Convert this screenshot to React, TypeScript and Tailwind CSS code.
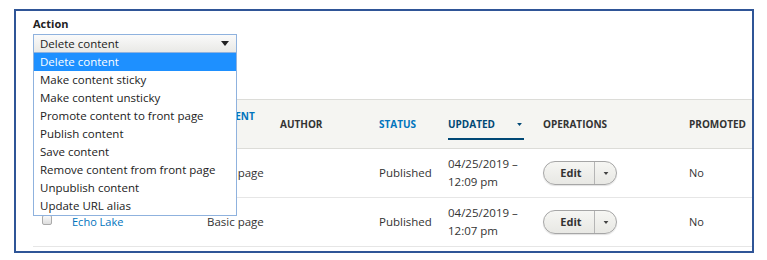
// --- Bulk action form over a content listing table ---

const actions = [
  'Delete content',
  'Make content sticky',
  'Make content unsticky',
  'Promote content to front page',
  'Publish content',
  'Save content',
  'Remove content from front page',
  'Unpublish content',
  'Update URL alias',
]

// first row's title sits under the open list, so it is left empty
const rows = [
  { title: '', type: 'Basic page', status: 'Published', date: '04/25/2019 –', time: '12:09 pm', promoted: 'No' },
  { title: 'Echo Lake', type: 'Basic page', status: 'Published', date: '04/25/2019 –', time: '12:07 pm', promoted: 'No' },
]

function Caret({ className }: { className?: string }) {
  return (
    <svg width="8" height="5" viewBox="0 0 8 5" className={className}>
      <path d="M0 0 L8 0 L4 5 Z" fill="currentColor" />
    </svg>
  )
}

function EditButton() {
  return (
    <div className="flex h-[24px] w-[74px] items-stretch rounded-full border border-[#a6a6a6] bg-gradient-to-b from-[#f6f6f3] to-[#e8e8e4] shadow-[0_1px_1px_rgba(0,0,0,0.12)]">
      <span className="flex flex-1 items-center justify-center pl-1 text-[11px] font-bold text-[#333]">Edit</span>
      <span className="flex w-[22px] items-center justify-center border-l border-[#b5b5b5] text-[#444]">
        <Caret className="h-[3px] w-[6px]" />
      </span>
    </div>
  )
}

export default function App() {
  return (
    <div className="h-[260px] w-[767px] bg-white pl-[14px] pt-[9px] font-['Open_Sans','Liberation_Sans',sans-serif] text-[#333]">
      <div className="relative h-[244px] w-[740px] overflow-hidden border-2 border-[#2f5597] bg-white">
        {/* --- Action form --- */}
        <div className="pl-[17px] pt-[6px]">
          <div className="text-[11px] font-bold leading-[14px] text-[#222]">Action</div>
          <div className="relative mt-[3px] w-[204px]">
            <div className="flex h-[19px] items-center justify-between border border-[#8fb2de] bg-gradient-to-b from-[#fafafa] to-[#e9e9e6] pl-[6px] pr-[7px] text-[11.5px] text-[#222]">
              <span>Delete content</span>
              <Caret className="h-[5px] w-[8px] text-[#222]" />
            </div>
            {/* --- open option list --- */}
            <ul className="absolute left-0 top-[18px] z-10 w-[204px] border border-[#8fb2de] bg-white text-[11.5px] leading-[18px] text-[#222]">
              {actions.map((a, i) => (
                <li key={a} className={`pl-[6px] ${i === 0 ? 'bg-[#1e90ff] text-white' : ''}`}>
                  {a}
                </li>
              ))}
            </ul>
          </div>
        </div>

        {/* --- Content table --- */}
        <div className="ml-[17px] mt-[46px] w-[760px] text-[12px]">
          <div className="flex h-[50px] items-center border-t border-b border-[#dcdcd8] bg-[#f5f5f2] text-[10px] font-bold uppercase leading-[15px]">
            <div className="w-[39px]" />
            <div className="w-[135px]" />
            <div className="w-[73px] text-[#0074bd]">Content<br />Type</div>
            <div className="w-[99px] text-[#333]">Author</div>
            <div className="w-[69px] text-[#0074bd]">Status</div>
            <div className="relative flex h-full w-[95px] items-center text-[#004875]">
              <span>Updated</span>
              <Caret className="absolute left-[69px] top-[23px] h-[3px] w-[5px]" />
              <div className="absolute bottom-[8px] left-0 h-[2px] w-[76px] bg-[#004875]" />
            </div>
            <div className="w-[146px] text-[#333]">Operations</div>
            <div className="text-[#333]">Promoted</div>
          </div>

          {rows.map((r, i) => (
            <div key={i} className="flex h-[49px] items-center border-b border-[#e6e6e6] text-[11.5px] leading-[18px] text-[#333]">
              <div className="flex w-[39px] self-start pl-[9px] pt-[17px]">
                <span className="h-[10px] w-[10px] rounded-[2px] border border-[#aaa] bg-gradient-to-b from-[#fafafa] to-[#ddd]" />
              </div>
              <div className="w-[135px] text-[11px] text-[#0074bd]">{r.title}</div>
              <div className="w-[73px]">{r.type}</div>
              <div className="w-[99px]" />
              <div className="w-[69px]">{r.status}</div>
              <div className="w-[95px]">
                <div>{r.date}</div>
                <div>{r.time}</div>
              </div>
              <div className="w-[146px]">
                <EditButton />
              </div>
              <div className="text-[11px]">{r.promoted}</div>
            </div>
          ))}
        </div>
      </div>
    </div>
  )
}
